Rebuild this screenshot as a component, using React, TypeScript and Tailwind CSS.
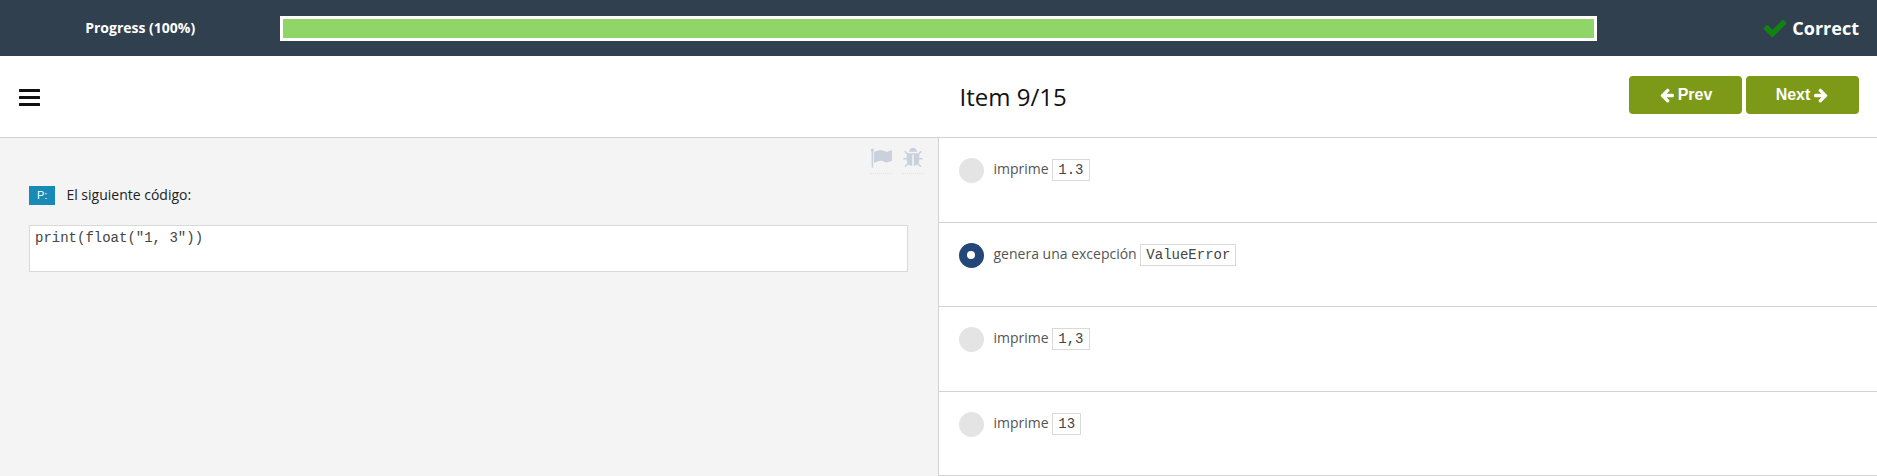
import { useState } from "react";

const ICONS = {
  check:
    "M1671 566q0 40-28 68l-724 724-136 136q-28 28-68 28t-68-28l-136-136-362-362q-28-28-28-68t28-68l136-136q28-28 68-28t68 28l294 295 656-657q28-28 68-28t68 28l136 136q28 28 28 68z",
  left: "M1664 896v128q0 53-32.5 90.5t-84.5 37.5h-704l293 294q38 36 38 90t-38 90l-75 76q-37 37-90 37-52 0-91-37l-651-652q-37-37-37-90 0-52 37-91l651-650q38-38 91-38 52 0 90 38l75 74q38 38 38 91t-38 91l-293 293h704q52 0 84.5 37.5t32.5 90.5z",
  right:
    "M1600 960q0 54-37 91l-651 651q-39 37-91 37-51 0-90-37l-75-75q-38-38-38-91t38-91l293-293h-704q-52 0-84.5-37.5t-32.5-90.5v-128q0-53 32.5-90.5t84.5-37.5h704l-293-294q-38-36-38-90t38-90l75-75q38-38 90-38 53 0 91 38l651 651q37 35 37 90z",
  flag: "M320 256q0 72-64 110v1266q0 13-9.5 22.5t-22.5 9.5h-64q-13 0-22.5-9.5t-9.5-22.5v-1266q-64-38-64-110 0-53 37.5-90.5t90.5-37.5 90.5 37.5 37.5 90.5zm1472 64v763q0 25-12.5 38.5t-39.5 27.5q-215 116-369 116-61 0-123.5-22t-108.5-48-115.5-48-142.5-22q-192 0-464 146-17 9-33 9-26 0-45-19t-19-45v-742q0-32 31-55 21-14 79-43 236-120 421-120 107 0 200 29t219 88q38 19 88 19 54 0 117.5-21t110-47 88-47 54.5-21q26 0 45 19t19 45z",
  bug: "M1696 960q0 26-19 45t-45 19h-224q0 171-67 290l208 209q19 19 19 45t-19 45q-18 19-45 19t-45-19l-198-197q-5 5-15 13t-42 28.5-65 36.5-82 29-97 13v-896h-128v896q-51 0-101.5-13.5t-87-33-66-39-43.5-32.5l-15-14-183 207q-20 21-48 21-24 0-43-16-19-18-20.5-44.5t15.5-46.5l202-227q-58-114-58-274h-224q-26 0-45-19t-19-45 19-45 45-19h224v-294l-173-173q-19-19-19-45t19-45 45-19 45 19l173 173h844l173-173q19-19 45-19t45 19 19 45-19 45l-173 173v294h224q26 0 45 19t19 45zm-480-576h-640q0-133 93.5-226.5t226.5-93.5 226.5 93.5 93.5 226.5z",
};

function Icon({ name, className }: { name: keyof typeof ICONS; className: string }) {
  return (
    <svg viewBox="0 0 1792 1792" fill="currentColor" aria-hidden="true" className={className}>
      <path d={ICONS[name]} />
    </svg>
  );
}

const ANSWERS = [
  { text: "imprime", code: "1.3" },
  { text: "genera una excepción", code: "ValueError" },
  { text: "imprime", code: "1,3" },
  { text: "imprime", code: "13" },
];

const navButton =
  "flex h-[38px] w-[113px] items-center justify-center gap-[3px] rounded bg-[#7c9a18] font-['Liberation_Sans',Arial,sans-serif] text-base font-bold text-white";

export default function App() {
  const [selected, setSelected] = useState(1);
  const progress = 100;

  return (
    <div className="flex min-h-screen flex-col bg-white font-['Open_Sans',sans-serif] text-sm text-[#222]">
      <header className="grid h-14 grid-cols-[15fr_70.4fr_15fr] items-center bg-[#31404f] text-white">
        <div id="progress-label" className="text-center font-bold">
          Progress ({progress}%)
        </div>
        <div
          role="progressbar"
          aria-labelledby="progress-label"
          aria-valuenow={progress}
          className="h-[25px] border-3 border-white"
        >
          <div className="h-full bg-[#90d568]" style={{ width: `${progress}%` }} />
        </div>
        <div className="flex items-center justify-end gap-1 pr-[18px] text-lg font-bold">
          <Icon name="check" className="size-[26px] text-[#128212]" />
          Correct
        </div>
      </header>

      <nav className="grid h-[82px] grid-cols-2 border-b border-[#d3d3d3]">
        <div className="flex items-center pt-0.5 pl-[19px]">
          <button type="button" aria-label="Menu">
            <svg viewBox="0 0 21 17" className="h-[17px] w-[21px]" fill="#111">
              <rect width="21" height="3" rx="0.5" />
              <rect y="7" width="21" height="3" rx="0.5" />
              <rect y="14" width="21" height="3" rx="0.5" />
            </svg>
          </button>
        </div>
        <div className="flex items-start justify-between pt-5 pr-[18px] pl-[21px]">
          <h1 className="text-2xl leading-[42px] text-[#111]">Item 9/15</h1>
          <div className="flex gap-1">
            <button type="button" className={navButton}>
              <Icon name="left" className="size-4" />
              Prev
            </button>
            <button type="button" className={navButton}>
              Next
              <Icon name="right" className="size-4" />
            </button>
          </div>
        </div>
      </nav>

      <main className="grid flex-1 grid-cols-2">
        <section className="bg-[#f4f4f4] pr-[31px] pl-[29px]">
          <div className="-mr-4 flex justify-end gap-2.5 pt-[9px] text-[#c9d1dc]">
            <button type="button" aria-label="Flag" className="border-b border-dotted border-[#e4e4e4] pb-1">
              <Icon name="flag" className="size-[22px]" />
            </button>
            <button type="button" aria-label="Report a bug" className="border-b border-dotted border-[#e4e4e4] pb-1">
              <Icon name="bug" className="size-[22px]" />
            </button>
          </div>
          <div className="flex items-start gap-[11px] pt-3">
            <span className="bg-[#178bb5] px-2 font-['Liberation_Sans',Arial,sans-serif] text-[11px] leading-[19px] font-medium text-white">
              P:
            </span>
            <p className="leading-[18px]">El siguiente código:</p>
          </div>
          <pre className="mt-5 h-[47px] border border-[#d9d9d9] bg-white px-[5px] pt-[3px] font-['Liberation_Mono',monospace] text-sm leading-[18px] text-[#444]">
            {'print(float("1, 3"))'}
          </pre>
        </section>

        <section className="-ml-px grid grid-rows-4 border-l border-[#d3d3d3] bg-white">
          {ANSWERS.map((a, i) => (
            <label key={i} className="flex items-start gap-2.5 border-b border-[#d3d3d3] pt-5 pl-5 text-[#555]">
              <input
                type="radio"
                name="answer"
                checked={selected === i}
                onChange={() => setSelected(i)}
                className="grid size-[25px] shrink-0 appearance-none place-items-center rounded-full bg-[#e4e4e4] before:size-2 before:rounded-full checked:bg-[#24477a] checked:before:bg-white"
              />
              <span className="leading-[22px]">
                {a.text}{" "}
                <code className="border border-[#d9d9d9] px-[5px] py-0.5 font-['Liberation_Mono',monospace] text-sm text-[#444]">
                  {a.code}
                </code>
              </span>
            </label>
          ))}
        </section>
      </main>
    </div>
  );
}
